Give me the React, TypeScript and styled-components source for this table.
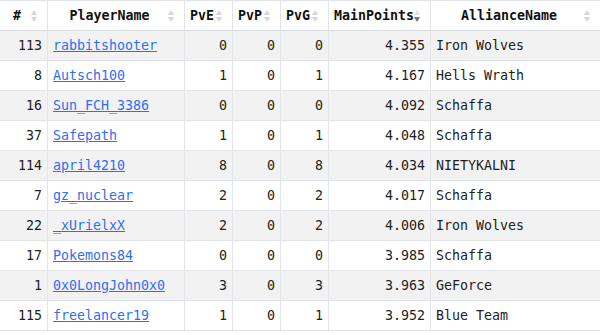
import styled, { createGlobalStyle, css } from 'styled-components'

const GlobalStyle = createGlobalStyle`
  html, body {
    margin: 0;
    padding: 0;
    background: #fff;
  }
  body {
    font-family: 'DejaVu Sans Mono', 'Liberation Mono', monospace;
    font-size: 13.3px;
    color: #222;
  }
`

type Player = {
  id: number
  name: string
  pve: number
  pvp: number
  pvg: number
  points: string
  alliance: string
}

const players: Player[] = [
  { id: 113, name: 'rabbitshooter', pve: 0, pvp: 0, pvg: 0, points: '4.355', alliance: 'Iron Wolves' },
  { id: 8, name: 'Autsch100', pve: 1, pvp: 0, pvg: 1, points: '4.167', alliance: 'Hells Wrath' },
  { id: 16, name: 'Sun_FCH_3386', pve: 0, pvp: 0, pvg: 0, points: '4.092', alliance: 'Schaffa' },
  { id: 37, name: 'Safepath', pve: 1, pvp: 0, pvg: 1, points: '4.048', alliance: 'Schaffa' },
  { id: 114, name: 'april4210', pve: 8, pvp: 0, pvg: 8, points: '4.034', alliance: 'NIETYKALNI' },
  { id: 7, name: 'gz_nuclear', pve: 2, pvp: 0, pvg: 2, points: '4.017', alliance: 'Schaffa' },
  { id: 22, name: '_xUrielxX', pve: 2, pvp: 0, pvg: 2, points: '4.006', alliance: 'Iron Wolves' },
  { id: 17, name: 'Pokemons84', pve: 0, pvp: 0, pvg: 0, points: '3.985', alliance: 'Schaffa' },
  { id: 1, name: '0x0LongJohn0x0', pve: 3, pvp: 0, pvg: 3, points: '3.963', alliance: 'GeForce' },
  { id: 115, name: 'freelancer19', pve: 1, pvp: 0, pvg: 1, points: '3.952', alliance: 'Blue Team' },
]

const columns: { title: string; width: number; sort?: 'desc' }[] = [
  { title: '#', width: 48 },
  { title: 'PlayerName', width: 137 },
  { title: 'PvE', width: 48 },
  { title: 'PvP', width: 48 },
  { title: 'PvG', width: 48 },
  { title: 'MainPoints', width: 102, sort: 'desc' },
  { title: 'AllianceName', width: 170 },
]

const Table = styled.table`
  border-collapse: separate;
  border-spacing: 0;
  table-layout: fixed;
  width: 601px;
  border-top: 1px solid #e2e5e9;
`

const HeadCell = styled.th<{ $sort?: 'desc' }>`
  position: relative;
  height: 30px;
  padding: 0 18px 0 5px;
  box-sizing: border-box;
  font-weight: bold;
  color: #111;
  text-align: center;
  white-space: nowrap;
  background: #fff;
  border-right: 1px solid #e2e5e9;
  border-bottom: 1px solid #dadde2;

  &::before,
  &::after {
    content: '';
    position: absolute;
    right: 10px;
    width: 0;
    height: 0;
    border-left: 3.5px solid transparent;
    border-right: 3.5px solid transparent;
  }
  &::before {
    top: 9px;
    border-bottom: 5px solid #d6d6d6;
  }
  &::after {
    top: 16px;
    border-top: 5px solid #d6d6d6;
  }
  ${({ $sort }) =>
    $sort === 'desc' &&
    css`
      &::before {
        border-bottom-color: #e2e2e2;
      }
      &::after {
        border-top-color: #777;
      }
    `}
`

const Row = styled.tr<{ $striped: boolean }>`
  background: ${({ $striped }) => ($striped ? '#f2f2f2' : '#fff')};
`

const Cell = styled.td<{ $align?: 'left' | 'right' }>`
  height: 30px;
  padding: 0 5px;
  box-sizing: border-box;
  text-align: ${({ $align }) => $align ?? 'right'};
  white-space: nowrap;
  border-right: 1px solid #e2e5e9;
  border-bottom: 1px solid #e2e5e9;
`

const PlayerLink = styled.a`
  color: #2f6fef;
  text-decoration: underline;
`

export default function App() {
  return (
    <>
      <GlobalStyle />
      <Table>
        <colgroup>
          {columns.map((c) => (
            <col key={c.title} style={{ width: c.width }} />
          ))}
        </colgroup>
        <thead>
          <tr>
            {columns.map((c) => (
              <HeadCell key={c.title} $sort={c.sort}>
                {c.title}
              </HeadCell>
            ))}
          </tr>
        </thead>
        <tbody>
          {players.map((p, i) => (
            <Row key={p.id} $striped={i % 2 === 0}>
              <Cell>{p.id}</Cell>
              <Cell $align='left'>
                <PlayerLink href='#'>{p.name}</PlayerLink>
              </Cell>
              <Cell>{p.pve}</Cell>
              <Cell>{p.pvp}</Cell>
              <Cell>{p.pvg}</Cell>
              <Cell>{p.points}</Cell>
              <Cell $align='left'>{p.alliance}</Cell>
            </Row>
          ))}
        </tbody>
      </Table>
    </>
  )
}
